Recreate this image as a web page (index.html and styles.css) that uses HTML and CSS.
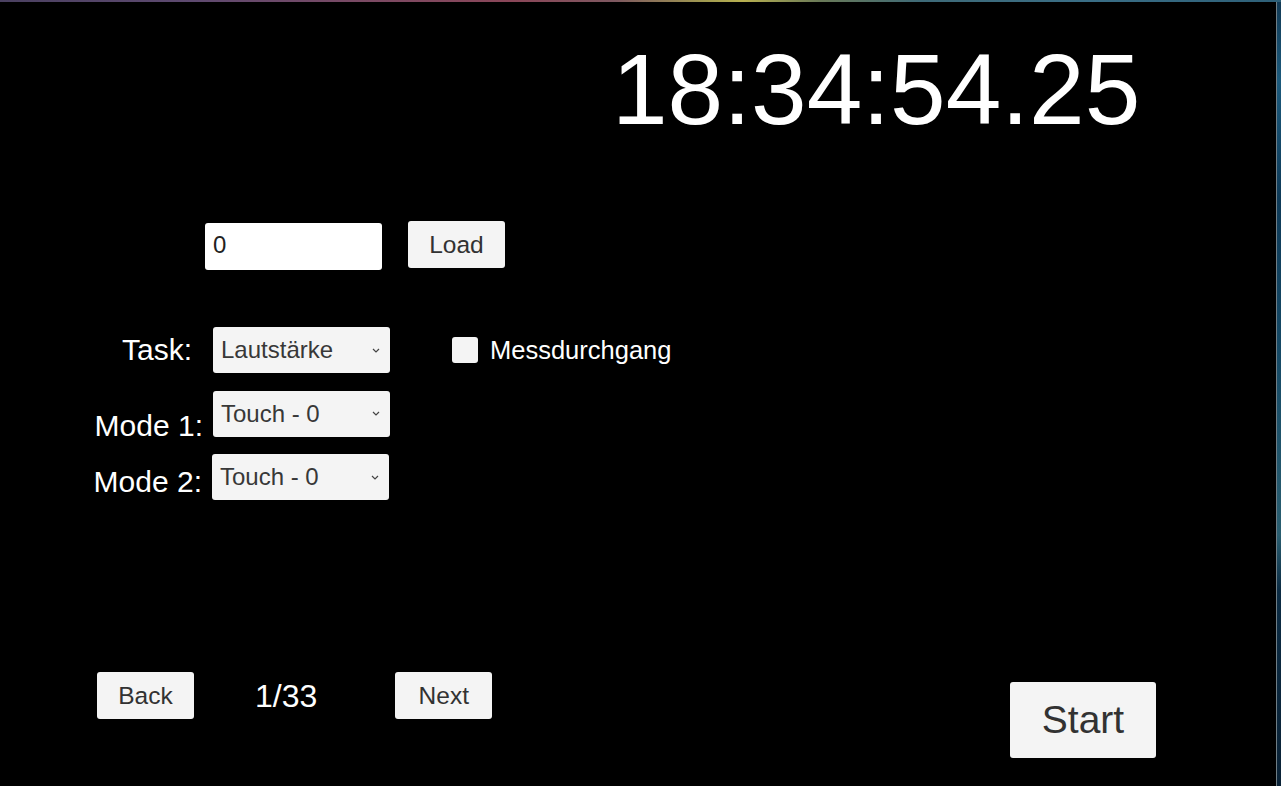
FILE: index.html
```html
<!DOCTYPE html>
<html lang="de">
<head>
<meta charset="utf-8">
<title>Task Runner</title>
<link rel="stylesheet" href="styles.css">
</head>
<body>
<div class="screen">
  <div class="topline"></div>
  <div class="main">
    <div class="app">
      <div class="clock">18:34:54.25</div>

      <div class="load-row">
        <div class="input">0</div>
        <div class="btn btn-load">Load</div>
      </div>

      <div class="form">
        <div class="label label-task">Task:</div>
        <div class="dropdown">
          <span>Lautstärke</span>
          <svg class="chev" width="8" height="5" viewBox="0 0 8 5"><path d="M1 1 L4 4 L7 1" fill="none" stroke="#444" stroke-width="1.2"/></svg>
        </div>
        <div class="check">
          <div class="box"></div>
          <span>Messdurchgang</span>
        </div>

        <div class="label label-mode label-mode1">Mode 1:</div>
        <div class="dropdown">
          <span>Touch - 0</span>
          <svg class="chev" width="8" height="5" viewBox="0 0 8 5"><path d="M1 1 L4 4 L7 1" fill="none" stroke="#444" stroke-width="1.2"/></svg>
        </div>
        <div></div>

        <div class="label label-mode label-mode2">Mode 2:</div>
        <div class="dropdown dropdown-2">
          <span>Touch - 0</span>
          <svg class="chev" width="8" height="5" viewBox="0 0 8 5"><path d="M1 1 L4 4 L7 1" fill="none" stroke="#444" stroke-width="1.2"/></svg>
        </div>
        <div></div>
      </div>

      <div class="nav-row">
        <div class="btn btn-nav">Back</div>
        <div class="counter">1/33</div>
        <div class="btn btn-nav">Next</div>
        <div class="btn btn-start">Start</div>
      </div>
    </div>
    <div class="frame"></div>
    <div class="wall"></div>
  </div>
</div>
</body>
</html>
```

FILE: styles.css
```css
html, body {
  margin: 0;
  padding: 0;
  background: #000;
  overflow: hidden;
}

.screen {
  width: 1281px;
  height: 786px;
  display: flex;
  flex-direction: column;
  font-family: "Liberation Sans", Arial, sans-serif;
}

.topline {
  height: 2px;
  flex: none;
  background: linear-gradient(90deg, #4a4060 0%, #5e4a70 15%, #7a4a64 28%, #8a4658 40%, #7e5860 48%, #a09a50 55%, #b8b050 58%, #6a7a58 64%, #3e6a78 72%, #3a6e86 85%, #2e6078 100%);
}

.main {
  flex: 1;
  display: flex;
}

.app {
  width: 1276px;
  flex: none;
  background: #000;
  display: flex;
  flex-direction: column;
}

.frame {
  width: 1px;
  flex: none;
  background: #6f7d84;
}

.wall {
  flex: 1;
  background: linear-gradient(180deg, #123a55 0%, #1c5a7c 10%, #0e3a58 25%, #164a66 45%, #2a5e70 68%, #0c2c44 75%, #0a2236 100%);
}

/* clock */
.clock {
  margin-top: 37px;
  padding-left: 612px;
  font-size: 100px;
  line-height: 100px;
  color: #fff;
  white-space: nowrap;
}

/* load row */
.load-row {
  margin-top: 82px;
  padding-left: 205px;
  display: flex;
  align-items: flex-start;
  gap: 26px;
}

.input {
  margin-top: 2px;
  width: 177px;
  height: 47px;
  box-sizing: border-box;
  background: #fff;
  border-radius: 3px;
  padding: 0 8px 3px;
  font-size: 24px;
  line-height: 44px;
  color: #222;
}

.btn {
  background: #f4f4f4;
  color: #323232;
  border-radius: 3px;
  display: flex;
  align-items: center;
  justify-content: center;
  box-sizing: border-box;
}

.btn-load {
  width: 97px;
  height: 47px;
  font-size: 24.5px;
}

/* form */
.form {
  margin-top: 57px;
  margin-left: 90px;
  display: grid;
  grid-template-columns: 115px 177px auto;
  grid-template-rows: 46px 46px 46px;
  column-gap: 8px;
  row-gap: 17.5px;
}

.label {
  color: #fff;
  font-size: 30px;
  text-align: right;
  white-space: nowrap;
}

.label-task {
  align-self: center;
  line-height: 32px;
  padding-right: 13px;
}

.label-mode {
  align-self: end;
  line-height: 28px;
  padding-right: 2px;
}

.label-mode1 {
  margin-bottom: -3px;
}

.label-mode2 {
  margin-bottom: 4px;
  padding-right: 3px;
}

.dropdown {
  background: #f4f4f4;
  border-radius: 3px;
  display: flex;
  align-items: center;
  justify-content: space-between;
  padding: 0 10px 0 8px;
  font-size: 24px;
  color: #383838;
}

.dropdown-2 {
  margin-left: -1px;
  margin-right: 1px;
}

.chev {
  flex: none;
}

.check {
  margin-left: 54px;
  display: flex;
  align-items: center;
  gap: 12px;
  color: #fff;
  font-size: 25.5px;
}

.box {
  width: 26px;
  height: 26px;
  background: #f4f4f4;
  border-radius: 3px;
  margin-top: -1px;
}

/* bottom nav */
.nav-row {
  margin-top: 172px;
  padding-left: 97px;
  padding-right: 120px;
  display: flex;
  align-items: flex-start;
}

.btn-nav {
  width: 97px;
  height: 47px;
  font-size: 24.5px;
}

.counter {
  margin-left: 61px;
  margin-right: 78px;
  height: 47px;
  line-height: 49px;
  color: #fff;
  font-size: 32px;
}

.btn-start {
  margin-left: auto;
  margin-top: 10px;
  width: 146px;
  height: 76px;
  font-size: 39px;
}
```
